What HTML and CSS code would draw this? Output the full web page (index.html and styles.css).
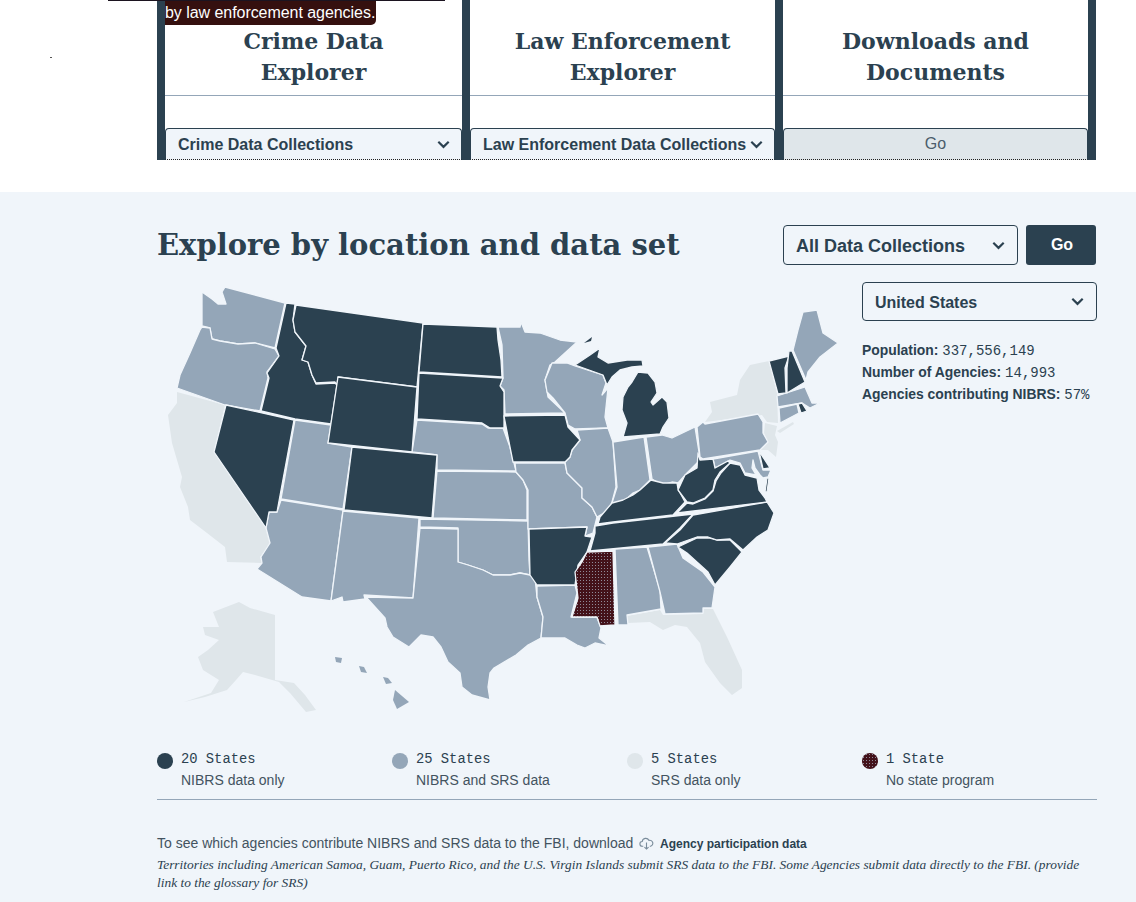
FILE: index.html
```html
<!DOCTYPE html>
<html lang="en">
<head>
    <meta charset="UTF-8">
    <title>Crime Data Explorer</title>
    <link rel="stylesheet" href="styles.css">
</head>
<body>
    <section class="top">
        <div class="top-line"></div>
        <div class="speck"></div>
        <div class="tooltip">by law enforcement agencies.</div>
        <div class="cards">
            <div class="card">
                <h2 class="card-title">Crime Data<br>Explorer</h2>
                <div class="card-select"><span>Crime Data Collections</span><svg class="chev" viewBox="0 0 12 8"><path d="M1.2 1.5 6 6.2l4.8-4.7"/></svg></div>
            </div>
            <div class="card">
                <h2 class="card-title">Law Enforcement<br>Explorer</h2>
                <div class="card-select"><span>Law Enforcement Data Collections</span><svg class="chev" viewBox="0 0 12 8"><path d="M1.2 1.5 6 6.2l4.8-4.7"/></svg></div>
            </div>
            <div class="card card-last">
                <h2 class="card-title">Downloads and<br>Documents</h2>
                <div class="card-go">Go</div>
            </div>
        </div>
    </section>

    <section class="explore">
        <div class="explore-head">
            <h1>Explore by location and data set</h1>
            <div class="select select-data"><span>All Data Collections</span><svg class="chev" viewBox="0 0 12 8"><path d="M1.2 1.5 6 6.2l4.8-4.7"/></svg></div>
            <div class="go-btn">Go</div>
        </div>

        <div class="map-row">
            <svg class="map" viewBox="157 280 705 460">
                <defs>
                    <pattern id="dots" width="3" height="3" patternUnits="userSpaceOnUse">
                        <rect width="3" height="3" fill="#43121a"/>
                        <rect x="1" y="1" width="1" height="1" fill="#8f8a98"/>
                    </pattern>
                </defs>
                <g class="srs">
                    <polygon points="177,392 225,405 214,452 266,528 271,543 260,557 262,563 227,562 225,547 207,533 190,520 188,507 180,487 182,477 172,443 168,415 177,403"/>
                    <polygon points="239,602 250,608 275,615 275,680 294,683 305,695 316,710 306,712 290,693 279,682 255,675 243,672 236,680 227,690 205,697 184,702 211,693 219,680 203,670 198,657 208,650 219,640 205,635 203,627 219,627 213,612"/>
                    <polygon points="627,616 660,610 663,615 703,614 704,609 713,609 727,637 742,670 742,688 732,695 720,683 705,662 700,643 687,627 675,625 663,630 650,622 628,623"/>
                    <polygon points="705,422 712,412 710,402 737,395 740,380 750,365 769,361 777,393 778,423 767,422 762,415"/>
                    <polygon points="777,431 793,422 794,424 780,433"/>
                    <polygon points="765,423 777,426 775,435 778,442 776,457 768,450 760,450 768,442 764,433"/>
                </g>
                <g class="both">
                    <polygon points="202,292 212,299 218,304 226,304 222,292 225,287 285,303 275,348 255,343 238,344 220,341 212,339 210,328 202,326 202,313"/>
                    <polygon points="202,327 210,328 212,339 220,341 238,344 255,343 275,349 279,356 267,372 268,378 260,411 225,405 177,388 180,375 190,353 200,330"/>
                    <polygon points="295,420 331,425 328,443 352,447 343,509 281,499"/>
                    <polygon points="281,500 343,510 331,601 302,597 257,569 262,563 261,557 270,543 266,528 269,512 277,512"/>
                    <polygon points="343,511 419,518 413,598 364,595 365,599 343,602 342,597 331,601"/>
                    <polygon points="417,420 482,424 488,428 503,428 510,447 516,471 437,470 437,455 412,452"/>
                    <polygon points="437,471 516,472 523,480 527,490 527,520 433,518"/>
                    <polygon points="420,519 528,521 529,560 530,575 520,573 510,575 493,575 483,570 468,565 458,562 458,528 420,527"/>
                    <polygon points="420,528 458,529 458,562 468,565 483,570 493,575 510,575 520,573 530,575 535,578 537,597 543,617 541,638 528,645 516,655 494,668 490,673 488,687 490,700 472,695 462,687 460,673 448,662 441,647 433,637 421,635 409,647 393,637 387,627 385,618 366,597 413,598"/>
                    <polygon points="537,586 575,585 577,593 571,617 597,617 601,628 599,638 609,646 595,643 585,648 577,645 565,638 541,638 543,617 537,597"/>
                    <polygon points="498,327 520,327 521,322 525,332 540,333 560,340 577,342 555,362 550,365 545,380 548,397 565,413 505,414 504,390 500,386 503,378 502,345"/>
                    <polygon points="515,463 565,463 567,473 582,488 582,498 592,507 597,517 595,525 593,533 585,536 587,527 528,529 528,490 523,480 516,472"/>
                    <polygon points="545,380 552,363 567,363 575,366 603,375 606,383 602,395 608,388 605,417 608,428 575,429 568,425 565,413 553,398 547,392"/>
                    <polygon points="577,430 608,428 613,442 616,487 612,502 609,510 597,517 592,507 582,498 582,488 567,473 565,462 570,457 572,450 580,440"/>
                    <polygon points="613,442 644,437 650,480 640,490 633,493 623,502 612,503 617,487"/>
                    <polygon points="646,437 662,435 672,438 695,427 699,452 700,460 687,473 678,483 672,482 662,485 652,479"/>
                    <polygon points="697,427 703,422 705,424 758,414 763,422 763,433 768,442 760,450 703,459 700,457"/>
                    <polygon points="615,549 647,547 660,590 661,609 627,615 628,625 618,625"/>
                    <polygon points="648,547 677,544 683,558 703,572 715,587 712,608 703,608 703,613 665,614 660,592"/>
                    <polygon points="713,459 758,451 763,470 771,470 768,477 763,478 760,475 755,468 753,460 752,468 756,475 745,473 740,463 730,460 715,468"/>
                    <polygon points="793,350 798,330 803,312 817,310 823,333 838,343 820,357 808,372 806,380"/>
                    <polygon points="777,396 805,387 812,403 820,403 810,408 802,403 778,407"/>
                    <polygon points="779,408 797,404 799,413 780,423"/>
                    <polygon class="plain" points="395,690 409,702 397,709 393,700"/>
                    <polygon class="plain" points="335,657 342,658 341,663 336,662"/>
                    <polygon class="plain" points="359,666 364,667 367,673 361,672"/>
                    <polygon class="plain" points="383,677 388,678 392,683 386,684"/>
                </g>
                <g class="nibrs">
                    <polygon points="286,303 295,304 293,320 295,332 306,346 302,360 308,362 312,375 316,384 335,383 337,385 331,424 295,419 261,411 269,378 267,373 279,356 276,348"/>
                    <polygon points="296,305 423,323 417,387 338,377 337,385 335,382 316,383 312,375 308,362 302,360 306,346 295,332 293,320"/>
                    <polygon points="338,377 417,387 412,452 328,443"/>
                    <polygon points="226,405 294,420 277,512 269,512 266,528 214,452"/>
                    <polygon points="352,447 437,455 432,518 344,510"/>
                    <polygon points="423,324 497,327 498,340 501,360 502,377 419,372"/>
                    <polygon points="419,373 503,378 500,386 504,392 504,428 490,428 482,423 417,419"/>
                    <polygon points="504,416 565,415 568,427 580,440 572,450 570,457 565,462 513,462 510,447"/>
                    <polygon points="529,529 587,527 585,536 592,537 587,552 578,565 575,585 537,585 530,575"/>
                    <polygon points="575,365 590,355 600,348 598,357 608,363 627,360 642,360 643,366 632,367 620,370 612,377 607,385 603,375"/>
                    <polygon class="plain" points="584,343 592,337 591,341"/>
                    <polygon points="623,437 627,423 622,410 623,397 628,387 632,382 635,377 638,372 648,373 655,382 657,393 651,402 653,405 662,397 667,402 669,418 663,427 660,434"/>
                    <polygon points="678,547 697,538 710,538 717,540 730,540 742,552 730,567 715,585 708,572 687,553"/>
                    <polygon points="693,515 767,502 774,513 768,530 757,537 743,550 730,539 717,540 708,537 697,537 677,544 665,543 680,530"/>
                    <polygon points="595,526 613,523 693,514 680,528 663,544 590,551 595,533"/>
                    <polygon points="598,524 600,517 612,503 623,500 633,495 640,490 651,480 663,483 677,483 678,489 685,502 673,515 613,522"/>
                    <polygon points="677,513 687,503 693,504 705,499 713,491 716,481 721,473 730,463 740,465 745,475 757,478 759,490 765,498 767,502"/>
                    <polygon points="700,460 713,459 715,468 728,461 730,463 720,472 715,480 713,490 705,498 693,503 687,502 678,490 685,475 697,468 698,453"/>
                    <polygon points="769,361 789,356 785,368 786,393 778,394"/>
                    <polygon points="789,351 792,351 805,382 787,393 787,368"/>
                    <polygon points="798,404 802,403 807,411 801,413"/>
                    <polygon points="759,451 770,468 763,469"/>
                    <polygon points="767,478 769,478 767,492 765,492"/>
                </g>
                <polygon class="none" points="587,552 613,551 615,625 600,626 597,617 572,617 578,598 575,572 582,562"/>
            </svg>
            <div class="side">
                <div class="select select-state"><span>United States</span><svg class="chev" viewBox="0 0 12 8"><path d="M1.2 1.5 6 6.2l4.8-4.7"/></svg></div>
                <p class="stat"><b>Population:</b> <span>337,556,149</span></p>
                <p class="stat"><b>Number of Agencies:</b> <span>14,993</span></p>
                <p class="stat"><b>Agencies contributing NIBRS:</b> <span>57%</span></p>
            </div>
        </div>

        <div class="legend">
            <div class="legend-item"><i class="dot dot-nibrs"></i><div><div class="count">20 States</div><div class="desc">NIBRS data only</div></div></div>
            <div class="legend-item"><i class="dot dot-both"></i><div><div class="count">25 States</div><div class="desc">NIBRS and SRS data</div></div></div>
            <div class="legend-item"><i class="dot dot-srs"></i><div><div class="count">5 States</div><div class="desc">SRS data only</div></div></div>
            <div class="legend-item"><i class="dot dot-none"></i><div><div class="count">1 State</div><div class="desc">No state program</div></div></div>
        </div>

        <p class="note">To see which agencies contribute NIBRS and SRS data to the FBI, download
            <svg class="cloud" viewBox="0 0 16 14"><path d="M4.5 10H3.6A2.6 2.6 0 0 1 3.4 4.8 3.8 3.8 0 0 1 10.6 3.6 3.2 3.2 0 0 1 12.4 10H11.5"/><path d="M8 6v7M5.8 10.8 8 13l2.2-2.2"/></svg>
            <b>Agency participation data</b></p>
        <p class="fine">Territories including American Samoa, Guam, Puerto Rico, and the U.S. Virgin Islands submit SRS data to the FBI. Some Agencies submit data directly to the FBI. (provide link to the glossary for SRS)</p>
    </section>
</body>
</html>
```

FILE: styles.css
```css
body {
    margin: 0;
    font-family: "Liberation Sans", Arial, sans-serif;
    color: #2b4150;
    background: #f0f5fa;
    overflow: hidden;
}

.top {
    position: relative;
    height: 192px;
    background: white;
}
.top-line {
    position: absolute;
    left: 108px;
    top: 0;
    width: 337px;
    height: 1px;
    background: #1c1420;
}
.speck {
    position: absolute;
    left: 50px;
    top: 57px;
    width: 2px;
    height: 1px;
    background: #555;
}
.tooltip {
    position: absolute;
    left: 165px;
    top: 1px;
    height: 24px;
    padding-right: 1px;
    background: #35100f;
    border-radius: 0 0 5px 0;
    color: white;
    font-size: 16px;
    letter-spacing: -0.05px;
    line-height: 23px;
}
.cards {
    display: grid;
    grid-template-columns: 305px 313px 321px;
    width: 939px;
    margin-left: 157px;
    height: 160px;
}
.card {
    display: flex;
    flex-direction: column;
    border-left: 8px solid #2b4150;
}
.card-last {
    border-right: 8px solid #2b4150;
}
.card-title {
    height: 96px;
    margin: 0 0 32px;
    padding-top: 26px;
    box-sizing: border-box;
    border-bottom: 1px solid #94a6b8;
    text-align: center;
    font-family: "DejaVu Serif", serif;
    font-size: 22px;
    line-height: 31px;
    font-weight: bold;
}
.card-select, .card-go {
    height: 32px;
    box-sizing: border-box;
    border: 1px solid #2b4150;
    border-bottom: 1px dotted #222;
    border-radius: 4px 4px 0 0;
}
.card-select {
    display: flex;
    align-items: center;
    justify-content: space-between;
    padding: 1px 5px 0 12px;
    background: #f0f5fa;
    font-size: 16px;
    font-weight: bold;
    white-space: nowrap;
}
.card-select .chev {
    margin-right: 6px;
}
.card-go {
    background: #dfe6ea;
    text-align: center;
    font-size: 16px;
    line-height: 29px;
    color: #4a5d6b;
}
.chev {
    flex: none;
    width: 13px;
    height: 9px;
    fill: none;
    stroke: #2b4150;
    stroke-width: 2;
}

.explore {
    width: 940px;
    margin-left: 157px;
}
.explore-head {
    display: flex;
    align-items: center;
    gap: 8px;
    padding-top: 33px;
    height: 40px;
}
h1 {
    flex: 1;
    margin: 0;
    font-family: "DejaVu Serif", serif;
    font-size: 29px;
    font-weight: bold;
    white-space: nowrap;
}
.select {
    display: flex;
    align-items: center;
    justify-content: space-between;
    box-sizing: border-box;
    height: 40px;
    padding: 2px 12px 0;
    border: 1px solid #2b4150;
    border-radius: 4px;
    font-size: 18px;
    font-weight: bold;
}
.select .chev {
    margin-top: -2px;
}
.select-data {
    width: 235px;
}
.select-state {
    width: 235px;
    height: 39px;
    margin-bottom: 18px;
    font-size: 16px;
}
.go-btn {
    width: 70px;
    height: 40px;
    margin-right: 1px;
    background: #2b4150;
    border-radius: 3px;
    color: white;
    text-align: center;
    font-size: 16px;
    font-weight: bold;
    line-height: 39px;
    padding-left: 2px;
    box-sizing: border-box;
}

.map-row {
    display: flex;
    height: 460px;
    margin-top: 15px;
}
.map {
    width: 705px;
    height: 460px;
}
.map polygon {
    stroke: #f0f5fa;
    stroke-width: 1.3;
    stroke-linejoin: round;
}
.map .srs polygon {
    fill: #dfe6ea;
    stroke: none;
}
.both polygon {
    fill: #94a6b8;
}
.map .plain {
    stroke: none;
}
.nibrs polygon {
    fill: #2b4150;
}
.map .none {
    fill: url(#dots);
}
.side {
    padding-top: 2px;
}
.stat {
    margin: 0;
    height: 22px;
    font-size: 14px;
    line-height: 22px;
    white-space: nowrap;
}
.stat b {
    font-size: 13.9px;
}
.stat span {
    font-family: "Liberation Mono", monospace;
    font-size: 14px;
    line-height: 1;
}

.legend {
    display: grid;
    grid-template-columns: repeat(4, 235px);
    height: 46px;
    padding-top: 13px;
    border-bottom: 1px solid #94a6b8;
}
.legend-item {
    display: flex;
    gap: 8px;
}
.dot {
    flex: none;
    width: 16px;
    height: 16px;
    border-radius: 50%;
}
.dot-nibrs { background: #2b4150; }
.dot-both { background: #94a6b8; }
.dot-srs { background: #dfe6ea; }
.dot-none {
    background: #43121a radial-gradient(circle, #8f8a98 0.5px, transparent 0.7px) 0 0 / 3px 3px;
}
.count {
    font-family: "Liberation Mono", monospace;
    font-size: 13.8px;
    line-height: 14px;
}
.desc {
    margin-top: 5px;
    font-size: 14px;
    line-height: 16px;
    color: #43535f;
}

.note {
    margin: 34px 0 0;
    font-size: 14px;
    line-height: 18px;
    color: #43535f;
}
.note b {
    margin-left: 2px;
    font-size: 12px;
    color: #2b4150;
}
.cloud {
    width: 15px;
    height: 13px;
    margin-left: 2px;
    vertical-align: -2px;
    fill: none;
    stroke: #7a8c9b;
    stroke-width: 1.2;
}
.fine {
    width: 925px;
    margin: 3px 0 0;
    font-family: "Liberation Serif", serif;
    font-style: italic;
    font-size: 13.4px;
    line-height: 18px;
    color: #2b4150;
}
```
